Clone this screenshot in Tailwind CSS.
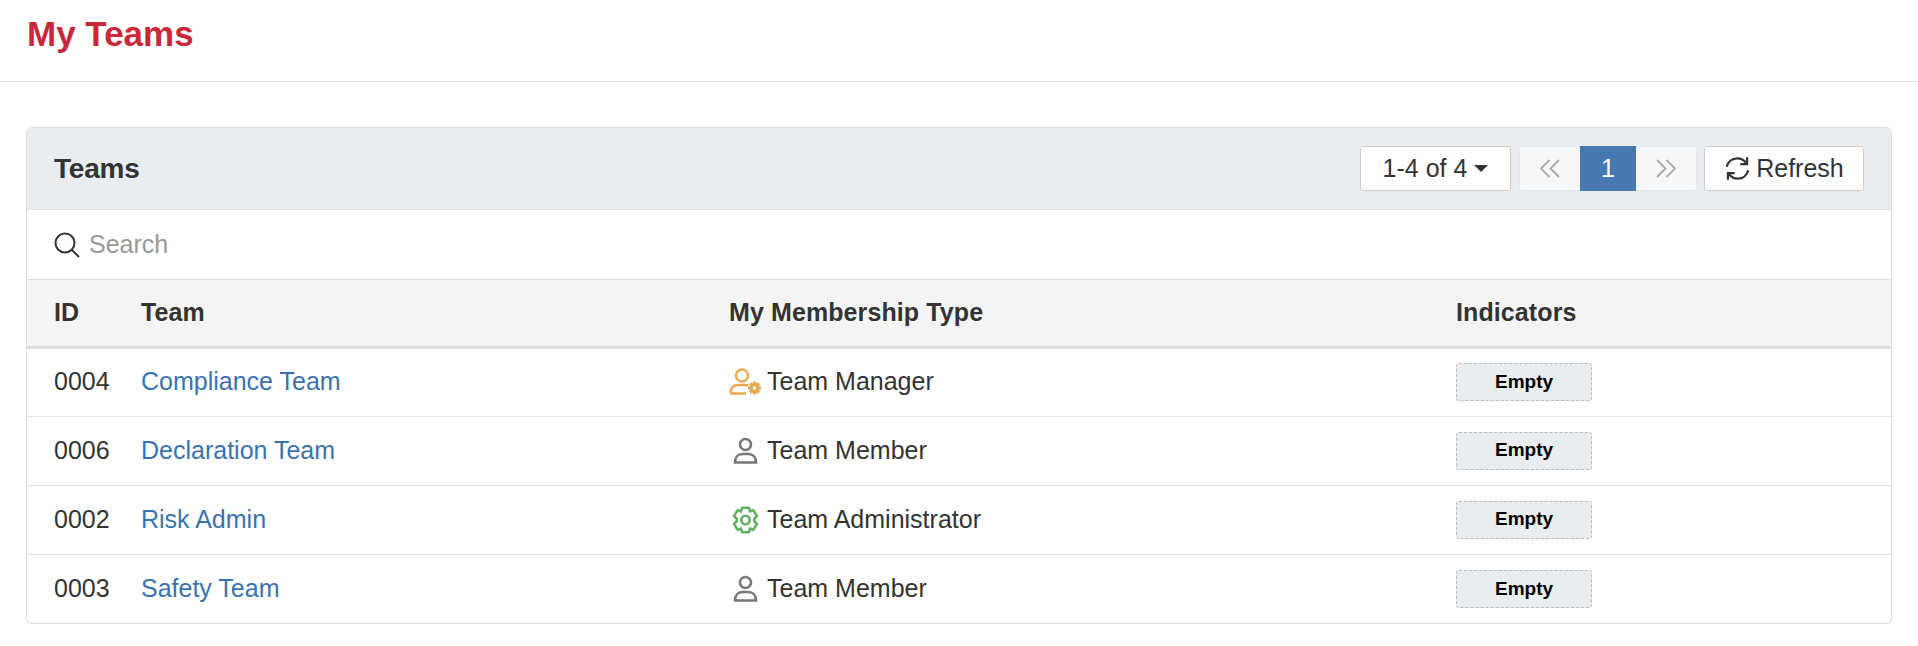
<!DOCTYPE html>
<html lang="en">
<head>
    <meta charset="UTF-8">
    <title>My Teams</title>
    <script src="https://cdn.jsdelivr.net/npm/@tailwindcss/browser@4"></script>
</head>
<body class="bg-white font-['Liberation_Sans',Arial,sans-serif] text-[#333]">

<!-- Page header -->
<div class="h-[82px] border-b border-[#e2e3e4] pl-[27px] pt-[13px]">
    <h1 class="text-[35px] leading-[42px] font-bold text-[#c9283b]">My Teams</h1>
</div>

<!-- Teams card -->
<div class="mx-[26px] mt-[45px] border border-[#dcdee0] rounded-[6px] overflow-hidden shadow-[0_1px_1px_rgba(0,0,0,0.05)]">

    <!-- Card title and paging -->
    <div class="h-[82px] bg-[#eaedf0] border-b border-[#dcdee0] flex items-center justify-between pl-[27px] pr-[27px]">
        <h2 class="text-[28px] font-bold tracking-[-0.2px] pt-[1px]">Teams</h2>
        <div class="flex items-center text-[25px] leading-none">
            <button class="h-[45px] w-[151px] bg-white border border-[#ccc] rounded-[3px] flex items-center justify-center gap-[7px]">
                1-4 of 4
                <span class="w-0 h-0 border-x-[7px] border-x-transparent border-t-[7px] border-t-[#333]"></span>
            </button>
            <div class="h-[45px] w-[178px] ml-[8px] flex bg-[#f6f7f9] border border-[#e4e6e8] rounded-[3px]">
                <span class="w-[60px] flex items-center justify-center">
                    <svg width="22" height="19" viewBox="0 0 22 19" fill="none" stroke="#a9a9a9" stroke-width="1.800"><path d="M10.500 1 2 9.500l8.500 8.500M20 1l-8.500 8.500L20 18"/></svg>
                </span>
                <span class="w-[56px] -my-px bg-[#4679b2] text-white flex items-center justify-center">1</span>
                <span class="w-[60px] flex items-center justify-center">
                    <svg width="22" height="19" viewBox="0 0 22 19" fill="none" stroke="#a9a9a9" stroke-width="1.800"><path d="m2 1 8.500 8.500L2 18M11.500 1 20 9.500 11.500 18"/></svg>
                </span>
            </div>
            <button class="h-[45px] w-[160px] ml-[7px] bg-white border border-[#ccc] rounded-[3px] flex items-center justify-center gap-[5px]">
                <svg width="27" height="27" viewBox="0 0 24 24" fill="none" stroke="#333" stroke-width="2"><path d="M2.500 10.500C3.500 6 7.200 3 11.800 3c3.300 0 6 1.600 7.700 4M20.500 2v6h-6M21.500 13.500C20.500 18 16.800 21 12.200 21c-3.300 0-6-1.600-7.700-4M3.500 22v-6h6"/></svg>
                Refresh
            </button>
        </div>
    </div>

    <!-- Search -->
    <div class="h-[70px] flex items-center gap-[9px] pl-[27px] border-b border-[#dcdee0]">
        <svg width="26" height="26" viewBox="0 0 26 26" fill="none" stroke="#333" stroke-width="2"><circle cx="11" cy="11" r="9.500"/><path d="m18 18 7 7"/></svg>
        <span class="text-[25px] text-[#999]">Search</span>
    </div>

    <!-- Teams table -->
    <table class="w-full table-fixed text-[25px] text-left">
        <thead class="bg-[#f4f4f4]">
            <tr class="h-[67px] border-b-[3px] border-[#dcdee0]">
                <th class="w-[87px] pl-[27px] font-bold tracking-[0.1px]">ID</th>
                <th class="w-[588px] pl-[27px] font-bold tracking-[0.1px]">Team</th>
                <th class="w-[727px] pl-[27px] font-bold tracking-[0.1px]">My Membership Type</th>
                <th class="pl-[27px] font-bold tracking-[0.1px]">Indicators</th>
            </tr>
        </thead>
        <tbody>
            <tr class="h-[69px] border-b border-[#e2e3e4]">
                <td class="pl-[27px]">0004</td>
                <td class="pl-[27px] text-[#3a72b0]">Compliance Team</td>
                <td class="pl-[27px]">
                    <div class="flex items-center gap-[5px]">
                        <svg width="33" height="28" viewBox="0 0 33 28" fill="none" stroke="#e9a94f" stroke-width="2.400"><circle cx="13" cy="7.500" r="6"/><path d="M1.500 25.500c0-5.500 3-8.500 8-8.500h7c1 0 2 .2 2.800.6M1.500 25.500H17"/><circle cx="25.500" cy="20" r="3.500" stroke-width="3.400"/><path d="M25.500 13.500v3M25.500 23.500v3M19 20h3M29 20h3M20.900 15.400l2.100 2.100M28 22.500l2.100 2.100M30.100 15.400 28 17.500M23 22.500l-2.100 2.100" stroke-width="3"/></svg>
                        <span>Team Manager</span>
                    </div>
                </td>
                <td class="pl-[27px]"><span class="flex items-center justify-center w-[136px] h-[38px] bg-[#eaedf0] border border-dashed border-[#bbb] rounded-[3px] text-[19px] font-bold text-black">Empty</span></td>
            </tr>
            <tr class="h-[69px] border-b border-[#e2e3e4]">
                <td class="pl-[27px]">0006</td>
                <td class="pl-[27px] text-[#3a72b0]">Declaration Team</td>
                <td class="pl-[27px]">
                    <div class="flex items-center gap-[5px]">
                        <svg width="33" height="28" viewBox="0 0 33 28" fill="none" stroke="#777" stroke-width="2.600"><circle cx="16.500" cy="7.500" r="5.500"/><path d="M6 25.500c0-5 3-8.500 7.500-8.500h6c4.500 0 7.500 3.500 7.500 8.500z"/></svg>
                        <span>Team Member</span>
                    </div>
                </td>
                <td class="pl-[27px]"><span class="flex items-center justify-center w-[136px] h-[38px] bg-[#eaedf0] border border-dashed border-[#bbb] rounded-[3px] text-[19px] font-bold text-black">Empty</span></td>
            </tr>
            <tr class="h-[69px] border-b border-[#e2e3e4]">
                <td class="pl-[27px]">0002</td>
                <td class="pl-[27px] text-[#3a72b0]">Risk Admin</td>
                <td class="pl-[27px]">
                    <div class="flex items-center gap-[5px]">
                        <svg width="33" height="28" viewBox="0 0 33 28" fill="none" stroke="#62b262" stroke-width="2.600" stroke-linejoin="round"><circle cx="16.500" cy="14" r="4.200"/><path d="M13 1.800h7l1 3.700 3.400-1.400 3.600 6-2.700 2.400v3l2.700 2.400-3.600 6-3.400-1.400-1 3.700h-7l-1-3.700-3.400 1.400-3.600-6 2.700-2.400v-3L5 10.100l3.600-6L12 5.500z"/></svg>
                        <span>Team Administrator</span>
                    </div>
                </td>
                <td class="pl-[27px]"><span class="flex items-center justify-center w-[136px] h-[38px] bg-[#eaedf0] border border-dashed border-[#bbb] rounded-[3px] text-[19px] font-bold text-black">Empty</span></td>
            </tr>
            <tr class="h-[69px]">
                <td class="pl-[27px]">0003</td>
                <td class="pl-[27px] text-[#3a72b0]">Safety Team</td>
                <td class="pl-[27px]">
                    <div class="flex items-center gap-[5px]">
                        <svg width="33" height="28" viewBox="0 0 33 28" fill="none" stroke="#777" stroke-width="2.600"><circle cx="16.500" cy="7.500" r="5.500"/><path d="M6 25.500c0-5 3-8.500 7.500-8.500h6c4.500 0 7.500 3.500 7.500 8.500z"/></svg>
                        <span>Team Member</span>
                    </div>
                </td>
                <td class="pl-[27px]"><span class="flex items-center justify-center w-[136px] h-[38px] bg-[#eaedf0] border border-dashed border-[#bbb] rounded-[3px] text-[19px] font-bold text-black">Empty</span></td>
            </tr>
        </tbody>
    </table>
</div>

</body>
</html>
